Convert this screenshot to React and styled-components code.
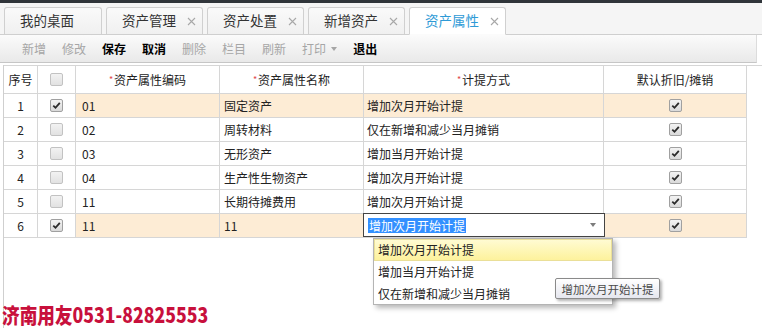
import React from 'react';
import styled, { createGlobalStyle, css } from 'styled-components';

const Global = createGlobalStyle`
  html, body { margin: 0; padding: 0; background: #fff; }
  body {
    font-family: "Noto Sans CJK SC", "Microsoft YaHei", sans-serif;
    font-size: 12px;
    color: #333;
  }
  #root { width: 762px; height: 328px; overflow: hidden; }
`;

const Page = styled.div`
  position: relative;
  width: 762px;
  height: 328px;
  overflow: hidden;
  display: flex;
  flex-direction: column;
`;

const TopStrip = styled.div`
  height: 3px;
  background: #30353a;
  flex: none;
`;

const TabBar = styled.div`
  flex: none;
  height: 32px;
  box-sizing: border-box;
  background: #f5f5f5;
  border-bottom: 1px solid #cfcfcf;
  display: flex;
  align-items: flex-end;
  gap: 4px;
  padding-left: 4px;
`;

const Tab = styled.div`
  box-sizing: border-box;
  width: ${p => (p.$first ? 98 : 97)}px;
  height: 28px;
  margin-bottom: -1px;
  border: 1px solid #d0d0d0;
  border-bottom-color: ${p => (p.$active ? '#fbfbfb' : '#cfcfcf')};
  border-radius: 3px 3px 0 0;
  background: ${p => (p.$active ? '#fff' : 'linear-gradient(#fafafa, #f0f0f0)')};
  color: ${p => (p.$active ? '#2e9ad6' : '#333')};
  display: flex;
  align-items: center;
  padding-left: 15px;
  font-size: 13.5px;
  line-height: 1;
`;

const CloseX = styled.svg`
  width: 9px;
  height: 9px;
  margin-left: 11px;
  flex: none;
`;

const Toolbar = styled.div`
  flex: none;
  height: 28px;
  box-sizing: border-box;
  margin-right: 5px;
  background: linear-gradient(#fbfbfb, #e9e9e9);
  border-bottom: 1px solid #c6c6c6;
  border-right: 1px solid #dcdcdc;
  display: flex;
  align-items: center;
  padding-left: 22px;
`;

const ToolButton = styled.div`
  margin-right: 16px;
  font-size: 12px;
  color: ${p => (p.$enabled ? '#000' : '#a6a6a6')};
  ${p => p.$enabled && css`font-weight: 600;`}
  display: flex;
  align-items: center;
  gap: 5px;
  line-height: 1;
`;

const Caret = styled.span`
  width: 0;
  height: 0;
  border-left: 3px solid transparent;
  border-right: 3px solid transparent;
  border-top: 4px solid ${p => p.$color || '#a6a6a6'};
`;

const GridPanel = styled.div`
  flex: 1;
  margin-top: 2px;
  margin-left: 3px;
  border-left: 1px solid #cfcfcf;
`;

const COLS = '34px 38px 144px 144px 240px 143px';

const Row = styled.div`
  display: grid;
  grid-template-columns: ${COLS};
  height: ${p => (p.$header ? 29 : 24)}px;
  box-sizing: border-box;
  ${p => p.$header && css`border-top: 1px solid #d6d6d6;`}
`;

const Cell = styled.div`
  position: relative;
  box-sizing: border-box;
  border-right: 1px solid #d6d6d6;
  border-bottom: 1px solid #d6d6d6;
  display: flex;
  align-items: center;
  justify-content: ${p => (p.$center ? 'center' : 'flex-start')};
  padding-left: ${p => (p.$center ? 0 : p.$pad ?? 4)}px;
  background: ${p => (p.$hl ? '#fdecd5' : '#fff')};
  color: #222;
  font-size: 12px;
  white-space: nowrap;
  line-height: 1;
`;

const Required = styled.span`
  color: #e04848;
  font-size: 9px;
  margin-right: 1px;
  align-self: flex-start;
  margin-top: 9px;
`;

const Box = styled.span`
  box-sizing: border-box;
  width: 13px;
  height: 13px;
  border: 1px solid ${p => (p.$checked ? '#a0a0a0' : '#c2c2c2')};
  border-radius: 2px;
  background: ${p =>
    p.$checked ? 'linear-gradient(#f3f3f3, #d9d9d9)' : 'linear-gradient(#f2f2f2, #e2e2e2)'};
  display: flex;
  align-items: center;
  justify-content: center;
`;

const Editor = styled.div`
  position: absolute;
  left: -1px;
  top: -1px;
  right: -2px;
  bottom: 0;
  box-sizing: border-box;
  border: 1px solid #444;
  background: #fff;
  display: flex;
  align-items: center;
  padding-left: 4px;
  padding-right: 8px;
  z-index: 2;
`;

const Selected = styled.span`
  background: #3390ff;
  color: #fff;
  line-height: 15px;
  padding: 0 1px;
`;

const EditorCaret = styled.span`
  margin-left: auto;
  width: 0;
  height: 0;
  border-left: 3.5px solid transparent;
  border-right: 3.5px solid transparent;
  border-top: 4px solid #7c7c7c;
`;

const DropList = styled.div`
  position: absolute;
  left: 373px;
  top: 238px;
  width: 240px;
  height: 67px;
  box-sizing: border-box;
  border: 1px solid #b4b4b4;
  background: #fff;
  box-shadow: 3px 3px 5px rgba(0, 0, 0, 0.28);
  z-index: 3;
  display: flex;
  flex-direction: column;
`;

const DropItem = styled.div`
  height: 22px;
  box-sizing: border-box;
  display: flex;
  align-items: center;
  padding-left: 3px;
  font-size: 12px;
  color: #222;
  border: 1px solid ${p => (p.$active ? '#eadf98' : 'transparent')};
  background: ${p => (p.$active ? 'linear-gradient(#fffbd2, #fdf29c)' : 'transparent')};
`;

const Tooltip = styled.div`
  position: absolute;
  left: 555px;
  top: 278px;
  width: 105px;
  height: 21px;
  box-sizing: border-box;
  border: 1px solid #8a8a8a;
  border-radius: 2px;
  background: linear-gradient(#ffffff, #e6e7ef);
  box-shadow: 2px 2px 3px rgba(0, 0, 0, 0.3);
  display: flex;
  align-items: center;
  justify-content: center;
  font-size: 11.5px;
  color: #4a4a4a;
  z-index: 4;
`;

const Watermark = styled.div`
  position: absolute;
  left: 2px;
  top: 302px;
  font-family: "Noto Sans CJK SC", sans-serif;
  font-weight: 900;
  font-size: 21px;
  line-height: 24px;
  color: #c8103c;
  white-space: nowrap;
  transform: scaleX(0.84);
  transform-origin: left center;
  z-index: 5;
`;

function X() {
  return (
    <CloseX viewBox="0 0 9 9">
      <path d="M1 1L8 8M8 1L1 8" stroke="#a8a8a8" strokeWidth="1.1" fill="none" />
    </CloseX>
  );
}

function Check({ checked }) {
  return (
    <Box $checked={checked}>
      {checked && (
        <svg width="9" height="9" viewBox="0 0 9 9">
          <path d="M1.3 4.6L3.5 6.8L7.8 1.8" stroke="#2a2a2a" strokeWidth="1.8" fill="none" />
        </svg>
      )}
    </Box>
  );
}

const tabs = [
  { label: '我的桌面', close: false },
  { label: '资产管理', close: true },
  { label: '资产处置', close: true },
  { label: '新增资产', close: true },
  { label: '资产属性', close: true, active: true },
];

const tools = [
  { label: '新增' },
  { label: '修改' },
  { label: '保存', enabled: true },
  { label: '取消', enabled: true },
  { label: '删除' },
  { label: '栏目' },
  { label: '刷新' },
  { label: '打印', caret: true },
  { label: '退出', enabled: true },
];

const rows = [
  { n: 1, checked: true, code: '01', name: '固定资产', method: '增加次月开始计提', hl: true },
  { n: 2, checked: false, code: '02', name: '周转材料', method: '仅在新增和减少当月摊销' },
  { n: 3, checked: false, code: '03', name: '无形资产', method: '增加当月开始计提' },
  { n: 4, checked: false, code: '04', name: '生产性生物资产', method: '增加次月开始计提' },
  { n: 5, checked: false, code: '11', name: '长期待摊费用', method: '增加次月开始计提' },
  { n: 6, checked: true, code: '11', name: '11', method: '增加次月开始计提', hl: true, editing: true },
];

export default function App() {
  return (
    <Page>
      <Global />
      <TopStrip />
      <TabBar>
        {tabs.map((t, i) => (
          <Tab key={t.label} $first={i === 0} $active={t.active}>
            {t.label}
            {t.close && <X />}
          </Tab>
        ))}
      </TabBar>
      <Toolbar>
        {tools.map(t => (
          <ToolButton key={t.label} $enabled={t.enabled}>
            {t.label}
            {t.caret && <Caret />}
          </ToolButton>
        ))}
      </Toolbar>
      <GridPanel>
        <Row $header>
          <Cell $center>序号</Cell>
          <Cell $center>
            <Check checked={false} />
          </Cell>
          <Cell $center>
            <Required>*</Required>资产属性编码
          </Cell>
          <Cell $center>
            <Required>*</Required>资产属性名称
          </Cell>
          <Cell $center>
            <Required>*</Required>计提方式
          </Cell>
          <Cell $center>默认折旧/摊销</Cell>
        </Row>
        {rows.map(r => (
          <Row key={r.n}>
            <Cell $center>{r.n}</Cell>
            <Cell $center>
              <Check checked={r.checked} />
            </Cell>
            <Cell $hl={r.hl} $pad={6}>
              {r.code}
            </Cell>
            <Cell $hl={r.hl} $pad={4}>
              {r.name}
            </Cell>
            <Cell $hl={r.hl} $pad={3}>
              {r.editing ? (
                <Editor>
                  <Selected>{r.method}</Selected>
                  <EditorCaret />
                </Editor>
              ) : (
                r.method
              )}
            </Cell>
            <Cell $hl={r.hl} $center>
              <Check checked />
            </Cell>
          </Row>
        ))}
      </GridPanel>
      <DropList>
        <DropItem $active>增加次月开始计提</DropItem>
        <DropItem>增加当月开始计提</DropItem>
        <DropItem>仅在新增和减少当月摊销</DropItem>
      </DropList>
      <Tooltip>增加次月开始计提</Tooltip>
      <Watermark>济南用友0531-82825553</Watermark>
    </Page>
  );
}
